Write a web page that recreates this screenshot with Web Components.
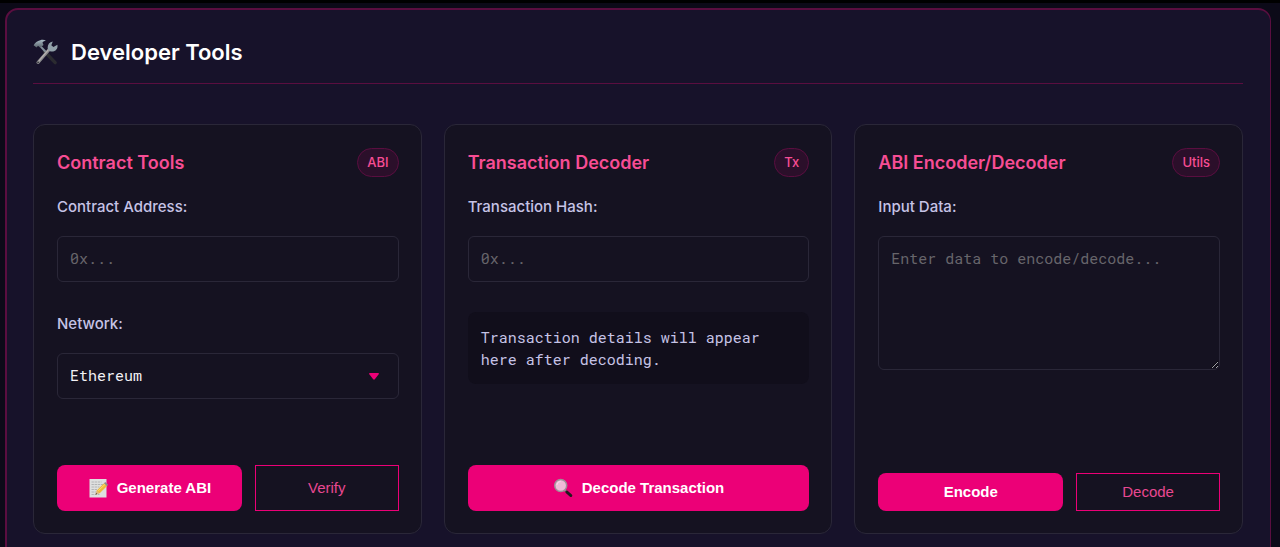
<!DOCTYPE html>
<html lang="en">
<head>
<meta charset="utf-8">
<meta name="viewport" content="width=device-width, initial-scale=1">
<title>Developer Tools</title>
<style>
  :root {
    --page: #0c0a18;
    --panel: #17122a;
    --card: #151221;
    --line: #2a2738;
    --accent: #ec0077;
    --accent-soft: #f74d94;
    --accent-dim: #5a0e40;
    --label: #c6c3e6;
    --mono: "Roboto Mono", "DejaVu Sans Mono", monospace;
  }
  html { background: var(--page); scrollbar-width: none; }
  body {
    margin: 0;
    padding: 5px 9px 0 5px;
    border-top: 3px solid #000;
    font: 15px/24px Inter, "Liberation Sans", sans-serif;
    color: #fff;
  }
</style>
</head>
<body>
<dev-panel heading="Developer Tools">
  <tool-card heading="Contract Tools" badge="ABI">
    <tool-field label="Contract Address:" placeholder="0x..."></tool-field>
    <tool-field label="Network:" kind="select" options="Ethereum,Polygon,Arbitrum"></tool-field>
    <tool-button slot="actions" icon="memo">Generate ABI</tool-button>
    <tool-button slot="actions" variant="outline">Verify</tool-button>
  </tool-card>
  <tool-card heading="Transaction Decoder" badge="Tx" single>
    <tool-field label="Transaction Hash:" placeholder="0x..."></tool-field>
    <tool-output>Transaction details will appear here after decoding.</tool-output>
    <tool-button slot="actions" icon="lens">Decode Transaction</tool-button>
  </tool-card>
  <tool-card heading="ABI Encoder/Decoder" badge="Utils">
    <tool-field label="Input Data:" kind="textarea" placeholder="Enter data to encode/decode..."></tool-field>
    <tool-button slot="actions">Encode</tool-button>
    <tool-button slot="actions" variant="outline">Decode</tool-button>
  </tool-card>
</dev-panel>

<script>
const ICONS = {
  tools: `<svg viewBox="0 0 24 24" aria-hidden="true">
    <defs><linearGradient id="m" x1="0" y1="0" x2="0" y2="1"><stop offset="0" stop-color="#a9bcc6"/><stop offset="1" stop-color="#566068"/></linearGradient></defs>
    <path d="M11 11.5 21.3 22.2" stroke="#2b2b30" stroke-width="3.2" stroke-linecap="round"/>
    <path d="M7.2 6.6 13 12.8" stroke="#82909a" stroke-width="2"/>
    <path d="M.6 5.6C2 3 4 1.2 7 .6c2.300-.5 4.200-.2 5.400.5-1.800.3-3 .9-3.300 1.900l1 2.300-2.900 2.600-2.200-1.700c-.7.1-1.200.6-1.600 1.400z" fill="url(#m)"/>
    <path d="M4.800 22 15.400 9.900" stroke="#8b8b8d" stroke-width="3" stroke-linecap="round"/>
    <path d="M5.200 21.100 14.700 10" stroke="#bbb5b2" stroke-width="1"/>
    <path d="M14.400 9.700c-1.100-3.400.6-7 4.600-7.700l-1.400 3.500 2 1.800 3.800-2.200c.9 4.200-2.700 7.100-6.500 6.300z" fill="#92a1aa"/>
    <circle cx="4.900" cy="21.900" r=".8" fill="#292930"/>
  </svg>`,
  memo: `<svg viewBox="0 0 20 20" aria-hidden="true">
    <path d="M1.500 1h17v18.500h-17z" fill="#dedfdf"/>
    <path d="M3.500 4h10M3.500 6.500h12M3.500 9h8M3.500 11.500h6M3.500 14h5M3.500 16.500h8" stroke="#b3b4b6" stroke-width="1" stroke-dasharray="2.400 .7"/>
    <path d="M7.500 16.600 9 12.200 16.300 5l3 2.800-7.400 7.300z" fill="#eebb3d"/>
    <path d="m10.200 12.900 7.300-7" stroke="#ffdc71" stroke-width="1"/>
    <path d="m7.500 16.600 1.400-3.900 2.600 2.500z" fill="#ddb785"/>
    <path d="m7.500 16.600.6-1.600 1.100 1z" fill="#333"/>
    <path d="m16 5.300 1.300-1.300 3 2.700-1.400 1.400z" fill="#8d8990"/>
  </svg>`,
  lens: `<svg viewBox="0 0 20 20" aria-hidden="true">
    <path d="m11.600 12 2.500 2.500" stroke="#8d8387" stroke-width="2.200"/>
    <path d="m13.700 13.900 4.200 3.700" stroke="#22191d" stroke-width="2.800" stroke-linecap="round"/>
    <circle cx="7.700" cy="7.500" r="6" fill="#efbad7" stroke="#9c9197" stroke-width="1.500"/>
    <path d="M3.800 7a4 4 0 0 1 3.800-3.600" fill="none" stroke="#f9dceb" stroke-width="1"/>
  </svg>`
};

class BaseElement extends HTMLElement {
  constructor() { super(); this.attachShadow({ mode: "open" }); }
  connectedCallback() { this.shadowRoot.innerHTML = this.render(); }
  attr(name) { return this.getAttribute(name) || ""; }
}

customElements.define("dev-panel", class extends BaseElement {
  render() {
    return `<style>
      :host { display: block; box-sizing: border-box; padding: 26px 27px 26px 26px; border: 2px solid var(--accent-dim);
        border-width: 2px 1px 1px 2px; border-radius: 13px; background: var(--panel); }
      header { display: flex; align-items: center; gap: 13px; padding: 0 0 15px; border-bottom: 1px solid var(--accent-dim); }
      svg { display: block; flex: none; width: 25px; height: 26px; fill: none; }
      h2 { margin: 0; font-size: 22px; line-height: 32px; font-weight: 600; }
      .grid { display: grid; grid-template-columns: repeat(auto-fit, minmax(320px, 1fr)); gap: 22px; padding-top: 40px; }
    </style>
    <header>${ICONS.tools}<h2>${this.attr("heading")}</h2></header>
    <div class="grid"><slot></slot></div>`;
  }
});

customElements.define("tool-card", class extends BaseElement {
  render() {
    return `<style>
      :host { display: flex; flex-direction: column; box-sizing: border-box; min-height: 410px; padding: 23px 22px 22px 23px;
        border: 1px solid var(--line); border-radius: 12px; background: var(--card); }
      header { display: flex; justify-content: space-between; align-items: center; margin-bottom: 18px; }
      h3 { margin: 0; font-size: 18px; line-height: 28px; font-weight: 600; color: var(--accent-soft); }
      .badge { padding: 0 9px; border: 1px solid var(--accent-dim); border-radius: 15px; background: #2b0f2a;
        color: var(--accent-soft); font-size: 13px; line-height: 27px; font-weight: 500; }
      .body { display: flex; flex-direction: column; gap: 30px; }
      .actions { display: grid; grid-template-columns: 9fr 7fr; gap: 13px; margin-top: auto; padding-top: 30px; }
      :host([single]) .actions { grid-template-columns: 1fr; }
    </style>
    <header><h3>${this.attr("heading")}</h3><span class="badge">${this.attr("badge")}</span></header>
    <div class="body"><slot></slot></div>
    <div class="actions"><slot name="actions"></slot></div>`;
  }
});

customElements.define("tool-field", class extends BaseElement {
  control() {
    const kind = this.attr("kind");
    if (kind === "select") {
      const options = this.attr("options").split(",").map(o => `<option>${o}</option>`).join("");
      return `<div class="select"><select id="control">${options}</select><svg viewBox="0 0 10 7" aria-hidden="true"><path d="M1 0h8q1.500.2.700 1.300L5.800 6.300q-.8.900-1.600 0L.3 1.300Q-.5.200 1 0z" fill="#ec0077"/></svg></div>`;
    }
    if (kind === "textarea") return `<textarea id="control" placeholder="${this.attr("placeholder")}"></textarea>`;
    return `<input id="control" type="text" placeholder="${this.attr("placeholder")}">`;
  }
  render() {
    return `<style>
      :host { display: flex; flex-direction: column; gap: 17px; }
      label { font-weight: 500; color: var(--label); }
      input, select, textarea { display: block; box-sizing: border-box; width: 100%; height: 46px; margin: 0; padding: 10px 12px 12px;
        border: 1px solid var(--line); border-radius: 6px; background: transparent; color: #f2f1f5;
        font: 15px/22px var(--mono); appearance: none; outline-color: var(--accent); }
      textarea { height: 134px; resize: vertical; color-scheme: dark; }
      ::placeholder { color: #67656b; opacity: 1; }
      option { background: #151221; }
      .select { display: grid; align-items: center; }
      .select > * { grid-area: 1 / 1; }
      svg { width: 10px; height: 7px; justify-self: end; margin-right: 20px; pointer-events: none; }
    </style>
    <label for="control">${this.attr("label")}</label>${this.control()}`;
  }
});

customElements.define("tool-output", class extends BaseElement {
  render() {
    return `<style>
      :host { display: block; padding: 14px 13px; border-radius: 8px; background: #110e1b; color: var(--label);
        font: 15px/22px var(--mono); }
    </style><slot></slot>`;
  }
});

customElements.define("tool-button", class extends BaseElement {
  render() {
    return `<style>
      :host { display: flex; align-items: stretch; }
      button { display: flex; flex: 1; align-items: center; justify-content: center; gap: 9px; box-sizing: border-box;
        margin: 0; padding: 9px 12px; border: 0; border-radius: 8px; background: var(--accent); color: #fff;
        font: 700 15px/20px "Liberation Sans", Arial, sans-serif; cursor: pointer; }
      :host([icon]) button { padding: 13px 12px; }
      :host([variant="outline"]) button { padding: 8px 12px; border: 1px solid var(--accent); border-radius: 0;
        background: transparent; color: #e84891; font-weight: 400; }
      svg { display: block; flex: none; width: 20px; height: 20px; fill: none; }
    </style>
    <button type="button">${ICONS[this.attr("icon")] || ""}<slot></slot></button>`;
  }
});
</script>
</body>
</html>
